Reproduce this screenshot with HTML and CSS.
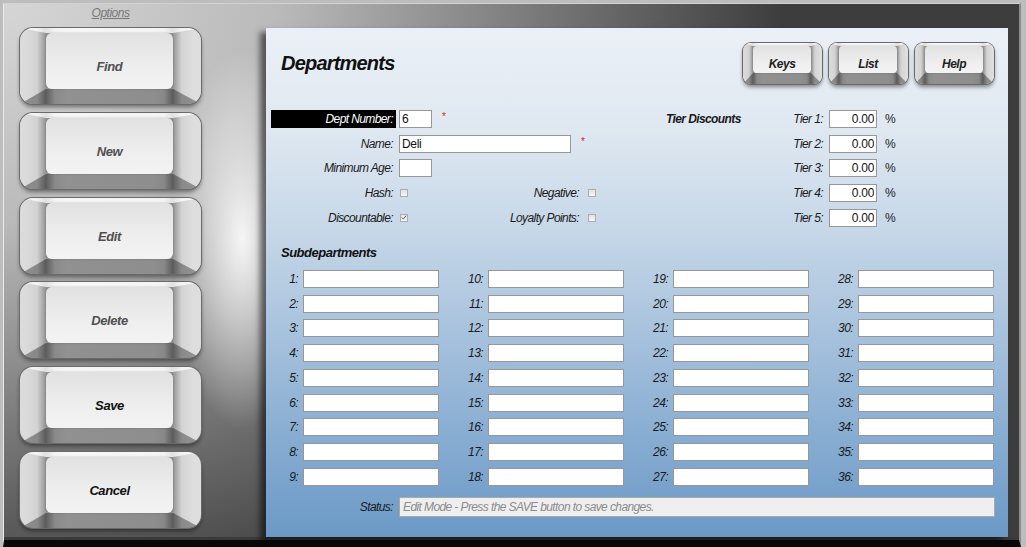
FILE: index.html
```html
<html>

<head>
<meta charset="UTF-8">
<title>Departments</title>

<link rel="stylesheet" href="styles.css">

</head>

<body>

<div class="frame">

<!-- left options -->
<div class="sidebar">
    <div class="options">Options</div>
    <div class="key big"><div class="face">Find</div></div>
    <div class="key big"><div class="face">New</div></div>
    <div class="key big"><div class="face">Edit</div></div>
    <div class="key big"><div class="face">Delete</div></div>
    <div class="key big dark"><div class="face">Save</div></div>
    <div class="key big dark"><div class="face">Cancel</div></div>
</div>

<!-- main panel -->
<div class="panel">

    <div class="head">
        <h1>Departments</h1>
        <div class="toolbar">
            <div class="key small"><div class="face">Keys</div></div>
            <div class="key small"><div class="face">List</div></div>
            <div class="key small"><div class="face">Help</div></div>
        </div>
    </div>

    <div class="top">
        <div class="general">
            <div class="row">
                <div class="label selected">Dept Number:</div>
                <input class="short" type="text" value="6">
                <span class="req">*</span>
            </div>
            <div class="row">
                <div class="label">Name:</div>
                <input class="name" type="text" value="Deli">
                <span class="req">*</span>
            </div>
            <div class="row">
                <div class="label">Minimum Age:</div>
                <input class="short" type="text" value="">
            </div>
            <div class="row">
                <div class="label">Hash:</div>
                <span class="check"></span>
                <div class="label2">Negative:</div>
                <span class="check"></span>
            </div>
            <div class="row">
                <div class="label">Discountable:</div>
                <span class="check"><svg width="7" height="7" viewBox="0 0 7 7"><path d="M1 3.6 L2.8 5.4 L6 1.4" fill="none" stroke="#555" stroke-width="1.1"/></svg></span>
                <div class="label2">Loyalty Points:</div>
                <span class="check"></span>
            </div>
        </div>

        <div class="tiers">
            <div class="row">
                <div class="tierhead">Tier Discounts</div>
                <div class="tierlabel">Tier 1:</div>
                <input class="pct" type="text" value="0.00">
                <span class="sign">%</span>
            </div>
            <div class="row">
                <div class="tierhead"></div>
                <div class="tierlabel">Tier 2:</div>
                <input class="pct" type="text" value="0.00">
                <span class="sign">%</span>
            </div>
            <div class="row">
                <div class="tierhead"></div>
                <div class="tierlabel">Tier 3:</div>
                <input class="pct" type="text" value="0.00">
                <span class="sign">%</span>
            </div>
            <div class="row">
                <div class="tierhead"></div>
                <div class="tierlabel">Tier 4:</div>
                <input class="pct" type="text" value="0.00">
                <span class="sign">%</span>
            </div>
            <div class="row">
                <div class="tierhead"></div>
                <div class="tierlabel">Tier 5:</div>
                <input class="pct" type="text" value="0.00">
                <span class="sign">%</span>
            </div>
        </div>
    </div>

    <h2>Subdepartments</h2>

    <div class="subs">
        <div class="sub"><label>1:</label><input type="text"></div>
        <div class="sub"><label>2:</label><input type="text"></div>
        <div class="sub"><label>3:</label><input type="text"></div>
        <div class="sub"><label>4:</label><input type="text"></div>
        <div class="sub"><label>5:</label><input type="text"></div>
        <div class="sub"><label>6:</label><input type="text"></div>
        <div class="sub"><label>7:</label><input type="text"></div>
        <div class="sub"><label>8:</label><input type="text"></div>
        <div class="sub"><label>9:</label><input type="text"></div>

        <div class="sub"><label>10:</label><input type="text"></div>
        <div class="sub"><label>11:</label><input type="text"></div>
        <div class="sub"><label>12:</label><input type="text"></div>
        <div class="sub"><label>13:</label><input type="text"></div>
        <div class="sub"><label>14:</label><input type="text"></div>
        <div class="sub"><label>15:</label><input type="text"></div>
        <div class="sub"><label>16:</label><input type="text"></div>
        <div class="sub"><label>17:</label><input type="text"></div>
        <div class="sub"><label>18:</label><input type="text"></div>

        <div class="sub"><label>19:</label><input type="text"></div>
        <div class="sub"><label>20:</label><input type="text"></div>
        <div class="sub"><label>21:</label><input type="text"></div>
        <div class="sub"><label>22:</label><input type="text"></div>
        <div class="sub"><label>23:</label><input type="text"></div>
        <div class="sub"><label>24:</label><input type="text"></div>
        <div class="sub"><label>25:</label><input type="text"></div>
        <div class="sub"><label>26:</label><input type="text"></div>
        <div class="sub"><label>27:</label><input type="text"></div>

        <div class="sub"><label>28:</label><input type="text"></div>
        <div class="sub"><label>29:</label><input type="text"></div>
        <div class="sub"><label>30:</label><input type="text"></div>
        <div class="sub"><label>31:</label><input type="text"></div>
        <div class="sub"><label>32:</label><input type="text"></div>
        <div class="sub"><label>33:</label><input type="text"></div>
        <div class="sub"><label>34:</label><input type="text"></div>
        <div class="sub"><label>35:</label><input type="text"></div>
        <div class="sub"><label>36:</label><input type="text"></div>
    </div>

    <div class="status">
        <div class="label">Status:</div>
        <input class="statusbox" type="text" value="Edit Mode - Press the SAVE button to save changes." readonly>
    </div>

</div>
</div>

</body>
</html>
```

FILE: styles.css
```css
html, body {
    margin: 0;
    padding: 0;
}

body {
    background: #bdbdbd;
    font-family: "Liberation Sans", Arial, sans-serif;
    font-size: 12px;
    letter-spacing: -0.6px;
    color: #1a1a1a;
    overflow: hidden;
}

.frame {
    display: flex;
    margin: 3px 0 0 3px;
    width: 1015px;
    height: 536px;
    border-top: 1px solid #d2d2d2;
    border-left: 1px solid #ececec;
    border-right: 2px solid #8c8c8c;
    border-bottom: 7px solid #080808;
    box-shadow: inset 0 -3px 0 #3a3a3a;
    background:
        radial-gradient(ellipse 70px 190px at 238px 235px, rgba(255,255,255,0.9), rgba(255,255,255,0)),
        radial-gradient(ellipse 780px 620px at 0 0, #d6d6d6 0%, #bababa 35%, #727272 72%, #3d3d3d 100%);
}

/* left column */

.sidebar {
    width: 246px;
    padding-left: 16px;
    flex-shrink: 0;
}

.options {
    width: 181px;
    margin-top: 2px;
    line-height: 15px;
    text-align: center;
    font-style: italic;
    letter-spacing: -0.5px;
    color: #777;
    text-decoration: underline;
    margin-bottom: 7px;
}

/* keyboard style buttons */

.key {
    box-sizing: border-box;
    border-style: solid;
    background: linear-gradient(to right, #8e8e8e 0%, #d2d2d2 7%, #dcdcdc 16%, #d8d8d8 84%, #cfcfcf 93%, #8a8a8a 100%);
    box-shadow: 0 0 0 1px #6a6a6a, 0 3px 4px rgba(0,0,0,0.45);
}

.key .face {
    height: 100%;
    box-sizing: border-box;
    display: flex;
    align-items: center;
    justify-content: center;
    background: linear-gradient(#e1e1e1, #eeeeee 60%, #f3f3f3);
    box-shadow: 0 0 2px rgba(0,0,0,0.25);
    font-weight: bold;
    font-style: italic;
}

.big {
    width: 181px;
    height: 76px;
    margin-bottom: 8.8px;
    border-width: 5px 28px 15px 26px;
    border-color: rgba(255,255,255,0.75) rgba(255,255,255,0.05) rgba(0,0,0,0.34) rgba(255,255,255,0.08);
    border-radius: 13px;
}

.big .face {
    border-radius: 6px;
    padding-top: 11px;
    font-size: 13px;
    letter-spacing: -0.4px;
    color: #505050;
}

.big.dark .face {
    color: #111;
}

.small {
    width: 79px;
    height: 41px;
    border-width: 3px 11px 11px 10px;
    border-color: rgba(255,255,255,0.75) rgba(255,255,255,0.05) rgba(0,0,0,0.34) rgba(255,255,255,0.08);
    border-radius: 8px;
}

.small .face {
    border-radius: 4px;
    padding-top: 8px;
    font-size: 12px;
    letter-spacing: -0.5px;
    color: #222;
}

/* main panel */

.panel {
    width: 742px;
    height: 509px;
    margin-top: 24px;
    flex-shrink: 0;
    background: linear-gradient(#ebf0f6 0%, #dfe8f1 20%, #c6d7e8 40%, #a7c2dd 60%, #88add2 80%, #6b99c6 100%);
    box-shadow: -6px 4px 6px rgba(0,0,0,0.55);
}

.head {
    display: flex;
    justify-content: space-between;
    align-items: flex-start;
    padding: 15px 14px 0 15px;
    box-sizing: border-box;
    height: 71px;
}

h1 {
    margin: 7px 0 0 0;
    font-size: 20px;
    line-height: 26px;
    letter-spacing: -0.8px;
    font-style: italic;
    font-weight: bold;
    color: #111;
}

.toolbar {
    display: flex;
    gap: 7px;
}

.top {
    display: flex;
    padding-left: 5px;
    margin-top: 7.6px;
}

.general {
    width: 395px;
}

.row {
    display: flex;
    align-items: center;
    height: 24.75px;
}

.label {
    width: 125px;
    box-sizing: border-box;
    padding-right: 3px;
    margin-right: 3px;
    line-height: 18px;
    text-align: right;
    font-style: italic;
}

.label.selected {
    background: #000;
    color: #fff;
}

input {
    box-sizing: border-box;
    height: 18px;
    margin: 0;
    padding: 0 2px;
    border: 1px solid #979797;
    background: #fff;
    font-family: inherit;
    font-size: 12px;
    letter-spacing: -0.3px;
    color: #111;
    outline: none;
}

.short {
    width: 33px;
}

.name {
    width: 172px;
}

.req {
    color: #e02020;
    font-size: 10px;
    margin-left: 10px;
    margin-top: -4px;
}

.check {
    width: 8px;
    height: 8px;
    box-sizing: border-box;
    border: 1px solid #adadad;
    background: linear-gradient(#e2e2e2, #f7f7f7);
    display: flex;
    align-items: center;
    justify-content: center;
    margin-left: 1px;
}

.label2 {
    width: 171px;
    text-align: right;
    font-style: italic;
    margin-right: 8px;
}

.tierhead {
    width: 110px;
    font-weight: bold;
    font-style: italic;
}

.tierlabel {
    width: 47px;
    text-align: right;
    font-style: italic;
    margin-right: 6px;
}

.pct {
    width: 48px;
    text-align: right;
    padding-right: 2px;
}

.sign {
    margin-left: 8px;
}

h2 {
    margin: 13.6px 0 8px 15px;
    font-size: 13px;
    line-height: 18px;
    letter-spacing: -0.5px;
    font-style: italic;
    font-weight: bold;
    color: #111;
}

.subs {
    display: grid;
    grid-auto-flow: column;
    grid-template-rows: repeat(9, 18px);
    grid-template-columns: 168px 180px 180px 180px;
    column-gap: 5px;
    row-gap: 6.75px;
    padding-left: 5px;
}

.sub {
    display: flex;
    align-items: center;
    gap: 5px;
}

.sub label {
    flex: 1;
    text-align: right;
    font-style: italic;
}

.sub input {
    width: 136px;
}

.status {
    display: flex;
    align-items: center;
    padding-left: 5px;
    margin-top: 11px;
}

.statusbox {
    width: 596px;
    height: 20px;
    background: #efefef;
    border-color: #a9a9a9;
    color: #8c8c8c;
    font-style: italic;
    letter-spacing: -0.6px;
    padding-left: 3px;
}
```
